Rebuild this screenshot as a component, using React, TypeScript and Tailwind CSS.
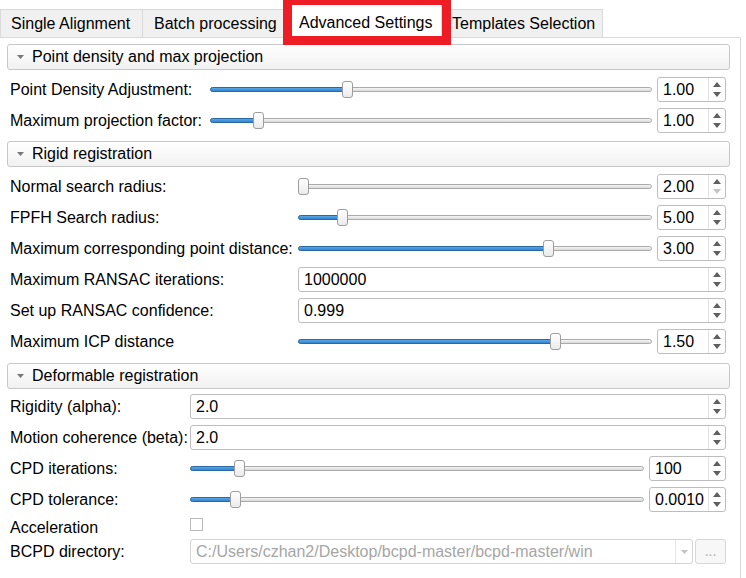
import React from 'react';

// spin arrows on the right side of a spin box
function Arrows({ downOff = false }: { downOff?: boolean }) {
  return (
    <div className="flex w-[17px] shrink-0 flex-col items-center justify-center gap-[5px] border-l border-[#e2e2e2]">
      <svg width="8" height="5" viewBox="0 0 8 5"><path d="M4 0 L8 5 L0 5 Z" fill="#5f5f5f" /></svg>
      <svg width="8" height="5" viewBox="0 0 8 5"><path d="M0 0 L8 0 L4 5 Z" fill={downOff ? '#c4c4c4' : '#5f5f5f'} /></svg>
    </div>
  );
}

function Spin({ value, wide = false, small = false, downOff = false }: { value: string; wide?: boolean; small?: boolean; downOff?: boolean }) {
  return (
    <div className={`flex h-[25px] shrink-0 rounded-[3px] border border-[#bdbdbd] bg-white ${wide ? 'flex-1' : small ? 'w-[77px]' : 'w-[69px]'}`}>
      <span className="flex-1 pl-[5px] text-[16px] leading-[23px] text-black">{value}</span>
      <Arrows downOff={downOff} />
    </div>
  );
}

function Slider({ pos }: { pos: number }) {
  return (
    <div className="relative h-[25px] flex-1">
      <div className="absolute inset-x-0 top-[10px] h-[5px] rounded-full border border-[#ababab] bg-gradient-to-b from-[#f5f5f5] to-[#dadada]" />
      <div
        className="absolute left-0 top-[10px] h-[5px] rounded-full border border-[#2b69a3] bg-gradient-to-b from-[#5aa6e8] to-[#2f84d0]"
        style={{ width: `calc(${pos} * (100% - 11px) + 6px)` }}
      />
      <div
        className="absolute top-[4px] h-[17px] w-[11px] rounded-[3px] border border-[#9d9d9d] bg-gradient-to-b from-white to-[#ebebeb]"
        style={{ left: `calc(${pos} * (100% - 11px))` }}
      />
    </div>
  );
}

function Header({ title, className = '' }: { title: string; className?: string }) {
  return (
    <div className={`flex h-[26px] items-center rounded-[3px] border border-[#c8c8c8] bg-gradient-to-b from-white to-[#f1f1f1] pl-[9px] ${className}`}>
      <svg width="7" height="4" viewBox="0 0 7 4"><path d="M0 0 L7 0 L3.5 4 Z" fill="#777" /></svg>
      <span className="ml-[8px] text-[16px] text-black">{title}</span>
    </div>
  );
}

const SEC1 = [
  { label: 'Point Density Adjustment:', pos: 0.307, value: '1.00' },
  { label: 'Maximum projection factor:', pos: 0.099, value: '1.00' },
];

const SEC2 = [
  { label: 'Normal search radius:', pos: 0, value: '2.00', downOff: true },
  { label: 'FPFH Search radius:', pos: 0.115, value: '5.00' },
  { label: 'Maximum corresponding point distance:', pos: 0.713, value: '3.00' },
  { label: 'Maximum RANSAC iterations:', value: '1000000' },
  { label: 'Set up RANSAC confidence:', value: '0.999' },
  { label: 'Maximum ICP distance', pos: 0.736, value: '1.50' },
];

const SEC3 = [
  { label: 'Rigidity (alpha):', value: '2.0' },
  { label: 'Motion coherence (beta):', value: '2.0' },
  { label: 'CPD iterations:', pos: 0.1, value: '100' },
  { label: 'CPD tolerance:', pos: 0.091, value: '0.0010' },
];

type Row = { label: string; value: string; pos?: number; downOff?: boolean };

function Rows({ rows, col, small = false }: { rows: Row[]; col: string; small?: boolean }) {
  return (
    <>
      {rows.map((r) => (
        <div key={r.label} className={`grid items-center ${col}`}>
          <span className="text-[16px] text-black whitespace-nowrap">{r.label}</span>
          {r.pos !== undefined ? (
            <div className="flex items-center gap-[5px]">
              <Slider pos={r.pos} />
              <Spin value={r.value} small={small} downOff={r.downOff} />
            </div>
          ) : (
            <div className="flex">
              <Spin value={r.value} wide />
            </div>
          )}
        </div>
      ))}
    </>
  );
}

const TABS = ['Single Alignment', 'Batch processing', 'Advanced Settings', 'Templates Selection'];

export default function App() {
  return (
    <div className="relative h-[578px] w-[746px] overflow-hidden bg-white font-['Liberation_Sans',Arial,sans-serif] text-black">
      {/* tab bar */}
      <div className="flex h-[37px] items-end">
        <div className="flex h-[28px] w-[143px] items-center border border-b-0 border-[#d9d9d9] bg-[#f0f0f0] pl-[10px] text-[16px]">{TABS[0]}</div>
        <div className="flex h-[28px] w-[147px] items-center border border-b-0 border-l-0 border-[#d9d9d9] bg-[#f0f0f0] pl-[11px] text-[16px]">{TABS[1]}</div>
        <div className="flex h-[33px] w-[152px] items-center border border-b-0 border-[#d9d9d9] bg-white pl-[8px] pt-[3px] text-[16px]">{TABS[2]}</div>
        <div className="flex h-[28px] w-[161px] items-center border border-b-0 border-l-0 border-[#d9d9d9] bg-[#f0f0f0] pl-[10px] text-[16px]">{TABS[3]}</div>
      </div>

      {/* annotation box */}
      <div className="pointer-events-none absolute left-[283px] top-[-4px] h-[49px] w-[168px] border-[9px] border-[#ee1c25]" />

      {/* pane */}
      <div className="h-[541px] w-[741px] border-r border-t border-[#d9d9d9]">
        <div className="flex flex-col pl-[7px] pr-[10px] pt-[6px]">
          <Header title="Point density and max projection" />
          <div className="mt-[7px] flex flex-col gap-[6px] pl-[3px] pr-[4px]">
            <Rows rows={SEC1} col="grid-cols-[200px_1fr]" />
          </div>

          <Header title="Rigid registration" className="mt-[8px]" />
          <div className="mt-[7px] flex flex-col gap-[6px] pl-[3px] pr-[4px]">
            <Rows rows={SEC2} col="grid-cols-[288px_1fr]" />
          </div>

          <Header title="Deformable registration" className="mt-[9px]" />
          <div className="mt-[5px] flex flex-col gap-[6px] pl-[3px] pr-[4px]">
            <Rows rows={SEC3} col="grid-cols-[180px_1fr]" small />
            <div className="grid h-[15px] grid-cols-[180px_1fr] items-start">
              <span className="mt-[2px] text-[16px] leading-[15px]">Acceleration</span>
              <div className="h-[13px] w-[13px] border border-[#b8b8b8] bg-white" />
            </div>
            <div className="grid grid-cols-[180px_1fr] items-center">
              <span className="text-[16px]">BCPD directory:</span>
              <div className="flex gap-[2px]">
                <div className="flex h-[25px] flex-1 rounded-[3px] border border-[#d3d3d3] bg-white">
                  <span className="flex-1 pl-[5px] text-[16px] leading-[23px] text-[#a6a6a6] whitespace-nowrap">C:/Users/czhan2/Desktop/bcpd-master/bcpd-master/win</span>
                  <div className="flex w-[17px] items-center justify-center border-l border-[#e6e6e6]">
                    <svg width="7" height="4" viewBox="0 0 7 4"><path d="M0 0 L7 0 L3.5 4 Z" fill="#c2c2c2" /></svg>
                  </div>
                </div>
                <div className="flex h-[25px] w-[31px] items-center justify-center rounded-[3px] border border-[#d6d6d6] bg-[#f7f7f7] text-[14px] text-[#a8a8a8]">...</div>
              </div>
            </div>
          </div>
        </div>
      </div>
    </div>
  );
}
